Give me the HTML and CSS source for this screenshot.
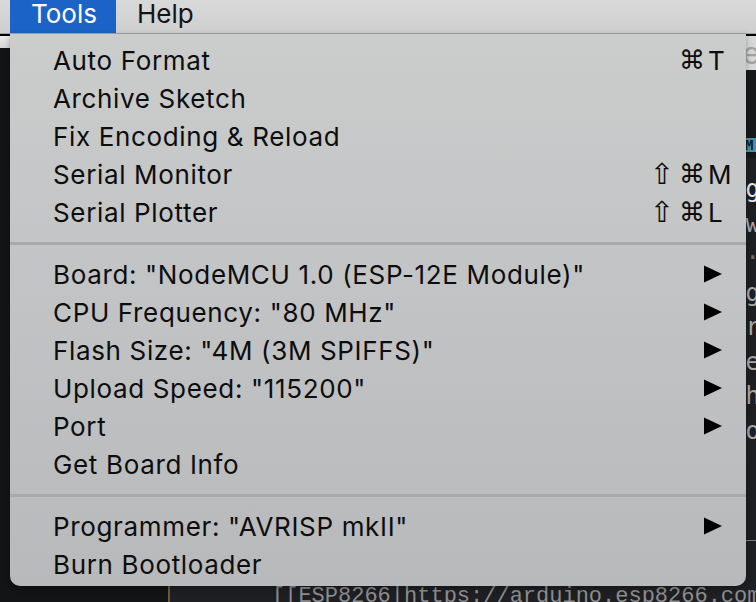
FILE: index.html
```html
<!DOCTYPE html>
<html lang="en">
<head>
<meta charset="utf-8">
<title>Tools menu</title>
<link rel="stylesheet" href="styles.css">
</head>
<body>
<div class="screen">
  <header class="menubar">
    <div class="mb-item mb-active">Tools</div>
    <div class="mb-item">Help</div>
  </header>

  <div class="workspace">
    <aside class="left-pane">
      <div class="lp-top"></div>
    </aside>
    <div class="divider"></div>
    <main class="editor">
      <div class="ed-toolbar"><span class="ed-tool-text">e</span></div>
      <div class="ed-tabs"><span class="ed-tab">M</span></div>
      <div class="code">
        <div class="line hi">g</div>
        <div class="line">w</div>
        <div class="line dim">·</div>
        <div class="line">g</div>
        <div class="line">r</div>
        <div class="line">e</div>
        <div class="line">h</div>
        <div class="line">o</div>
        <div class="rule"></div>
        <div class="line last">[[ESP8266|https://arduino.esp8266.com/stable/package</div>
      </div>
    </main>
  </div>

  <nav class="dropdown">
    <div class="row"><span class="label">Auto Format</span><span class="sc"><span class="mods">⌘</span><span class="key">T</span></span></div>
    <div class="row"><span class="label">Archive Sketch</span></div>
    <div class="row"><span class="label">Fix Encoding &amp; Reload</span></div>
    <div class="row"><span class="label">Serial Monitor</span><span class="sc"><span class="shift">⇧</span><span class="mods">⌘</span><span class="key">M</span></span></div>
    <div class="row"><span class="label">Serial Plotter</span><span class="sc"><span class="shift">⇧</span><span class="mods">⌘</span><span class="key">L</span></span></div>
    <div class="sep"></div>
    <div class="row"><span class="label">Board: "NodeMCU 1.0 (ESP-12E Module)"</span><svg class="arrow" viewBox="0 0 18 18"><polygon points="0,0.5 18,9 0,17.5"/></svg></div>
    <div class="row"><span class="label">CPU Frequency: "80 MHz"</span><svg class="arrow" viewBox="0 0 18 18"><polygon points="0,0.5 18,9 0,17.5"/></svg></div>
    <div class="row"><span class="label">Flash Size: "4M (3M SPIFFS)"</span><svg class="arrow" viewBox="0 0 18 18"><polygon points="0,0.5 18,9 0,17.5"/></svg></div>
    <div class="row"><span class="label">Upload Speed: "115200"</span><svg class="arrow" viewBox="0 0 18 18"><polygon points="0,0.5 18,9 0,17.5"/></svg></div>
    <div class="row"><span class="label">Port</span><svg class="arrow" viewBox="0 0 18 18"><polygon points="0,0.5 18,9 0,17.5"/></svg></div>
    <div class="row"><span class="label">Get Board Info</span></div>
    <div class="sep"></div>
    <div class="row"><span class="label">Programmer: "AVRISP mkII"</span><svg class="arrow" viewBox="0 0 18 18"><polygon points="0,0.5 18,9 0,17.5"/></svg></div>
    <div class="row"><span class="label">Burn Bootloader</span></div>
  </nav>
</div>
</body>
</html>
```

FILE: styles.css
```css
* { box-sizing: border-box; }
html, body { margin: 0; padding: 0; }
body {
  width: 756px;
  height: 602px;
  overflow: hidden;
  background: #141517;
  font-family: "Inter", "DejaVu Sans", sans-serif;
}
.screen {
  position: relative;
  width: 756px;
  height: 602px;
  display: flex;
  flex-direction: column;
  overflow: hidden;
}

/* menu bar */
.menubar {
  height: 34px;
  flex: none;
  display: flex;
  padding-left: 10px;
  background: linear-gradient(#d9d9d9, #cfcfcf);
  border-bottom: 1px solid #a3a3a3;
}
.mb-item {
  height: 33px;
  padding: 1px 19px 0 21px;
  font-size: 26px;
  line-height: 26px;
  color: #141414;
}
.mb-active {
  width: 106px;
  background: #1b63c6;
  color: #ffffff;
}

/* background window */
.workspace {
  flex: 1;
  min-height: 0;
  display: flex;
  border-top: 2px solid #000;
}
.left-pane {
  flex: none;
  width: 168px;
  background: #131416;
}
.lp-top {
  height: 12px;
  background: linear-gradient(#ececec, #d6d6d6);
}
.divider {
  flex: none;
  width: 2px;
  background: #6b5a32;
}
.editor {
  flex: 1;
  min-width: 0;
  overflow: hidden;
  display: flex;
  flex-direction: column;
  background: #1e1f22;
}
.ed-toolbar {
  flex: none;
  height: 34px;
  background: #d8d8d8;
  display: flex;
  justify-content: flex-end;
  align-items: center;
  font-size: 30px;
  color: #a2a2a2;
  overflow: hidden;
  white-space: nowrap;
}
.ed-tool-text { margin-right: -4px; }
.ed-tabs {
  flex: none;
  height: 88px;
  background: #17181a;
  display: flex;
  justify-content: flex-end;
  align-items: flex-end;
  padding-bottom: 6px;
}
.ed-tab {
  width: 18px;
  height: 14px;
  margin-right: -6px;
  background: #4f8fa1;
  color: #10202a;
  font-family: "DejaVu Sans Mono", monospace;
  font-size: 14px;
  font-weight: bold;
  line-height: 14px;
  padding-left: 1px;
}
.code {
  flex: 1;
  display: flex;
  flex-direction: column;
  padding-top: 14px;
  font-family: "DejaVu Sans Mono", monospace;
  font-size: 24px;
  color: #a8a8a8;
}
.line {
  flex: none;
  height: 34.5px;
  line-height: 34px;
  text-align: right;
  margin-right: -4px;
  white-space: nowrap;
}
.line.hi { color: #e6e6e6; }
.line.dim { color: #6c6c6c; }
.rule {
  flex: none;
  height: 1px;
  margin-top: 92px;
  background: #7c7c7c;
  margin-left: 560px;
}
.line.last {
  margin-top: auto;
  margin-bottom: -10px;
  margin-right: 0;
  text-align: left;
  padding-left: 102px;
  color: #8d8d8f;
  height: 30px;
  line-height: 30px;
  font-size: 22px;
  font-family: "Liberation Mono", monospace;
}

/* dropdown menu */
.dropdown {
  position: absolute;
  top: 34px;
  left: 10px;
  width: 736px;
  height: 552px;
  padding-top: 7px;
  background: linear-gradient(#cbcccc, #b8b9bb);
  border-radius: 0 0 10px 10px;
  box-shadow: 0 2px 6px rgba(0, 0, 0, 0.3);
}
.row {
  height: 38px;
  display: flex;
  align-items: center;
  padding-left: 43px;
  color: #0d0d0d;
  font-size: 26px;
}
.label {
  white-space: nowrap;
  letter-spacing: 0.65px;
}
.sc {
  margin-left: auto;
  margin-right: 14px;
  display: flex;
  align-items: center;
}
.shift {
  font-family: "DejaVu Sans", sans-serif;
  font-size: 29px;
  margin-right: 5px;
}
.mods {
  font-family: "DejaVu Sans", sans-serif;
  margin-right: 3px;
}
.key { width: 24px; }
.arrow {
  margin-left: auto;
  margin-right: 24px;
  width: 18px;
  height: 18px;
  fill: #000;
}
.sep {
  height: 3px;
  margin: 11px 0 10px;
  background: #a8a9ab;
}
```
